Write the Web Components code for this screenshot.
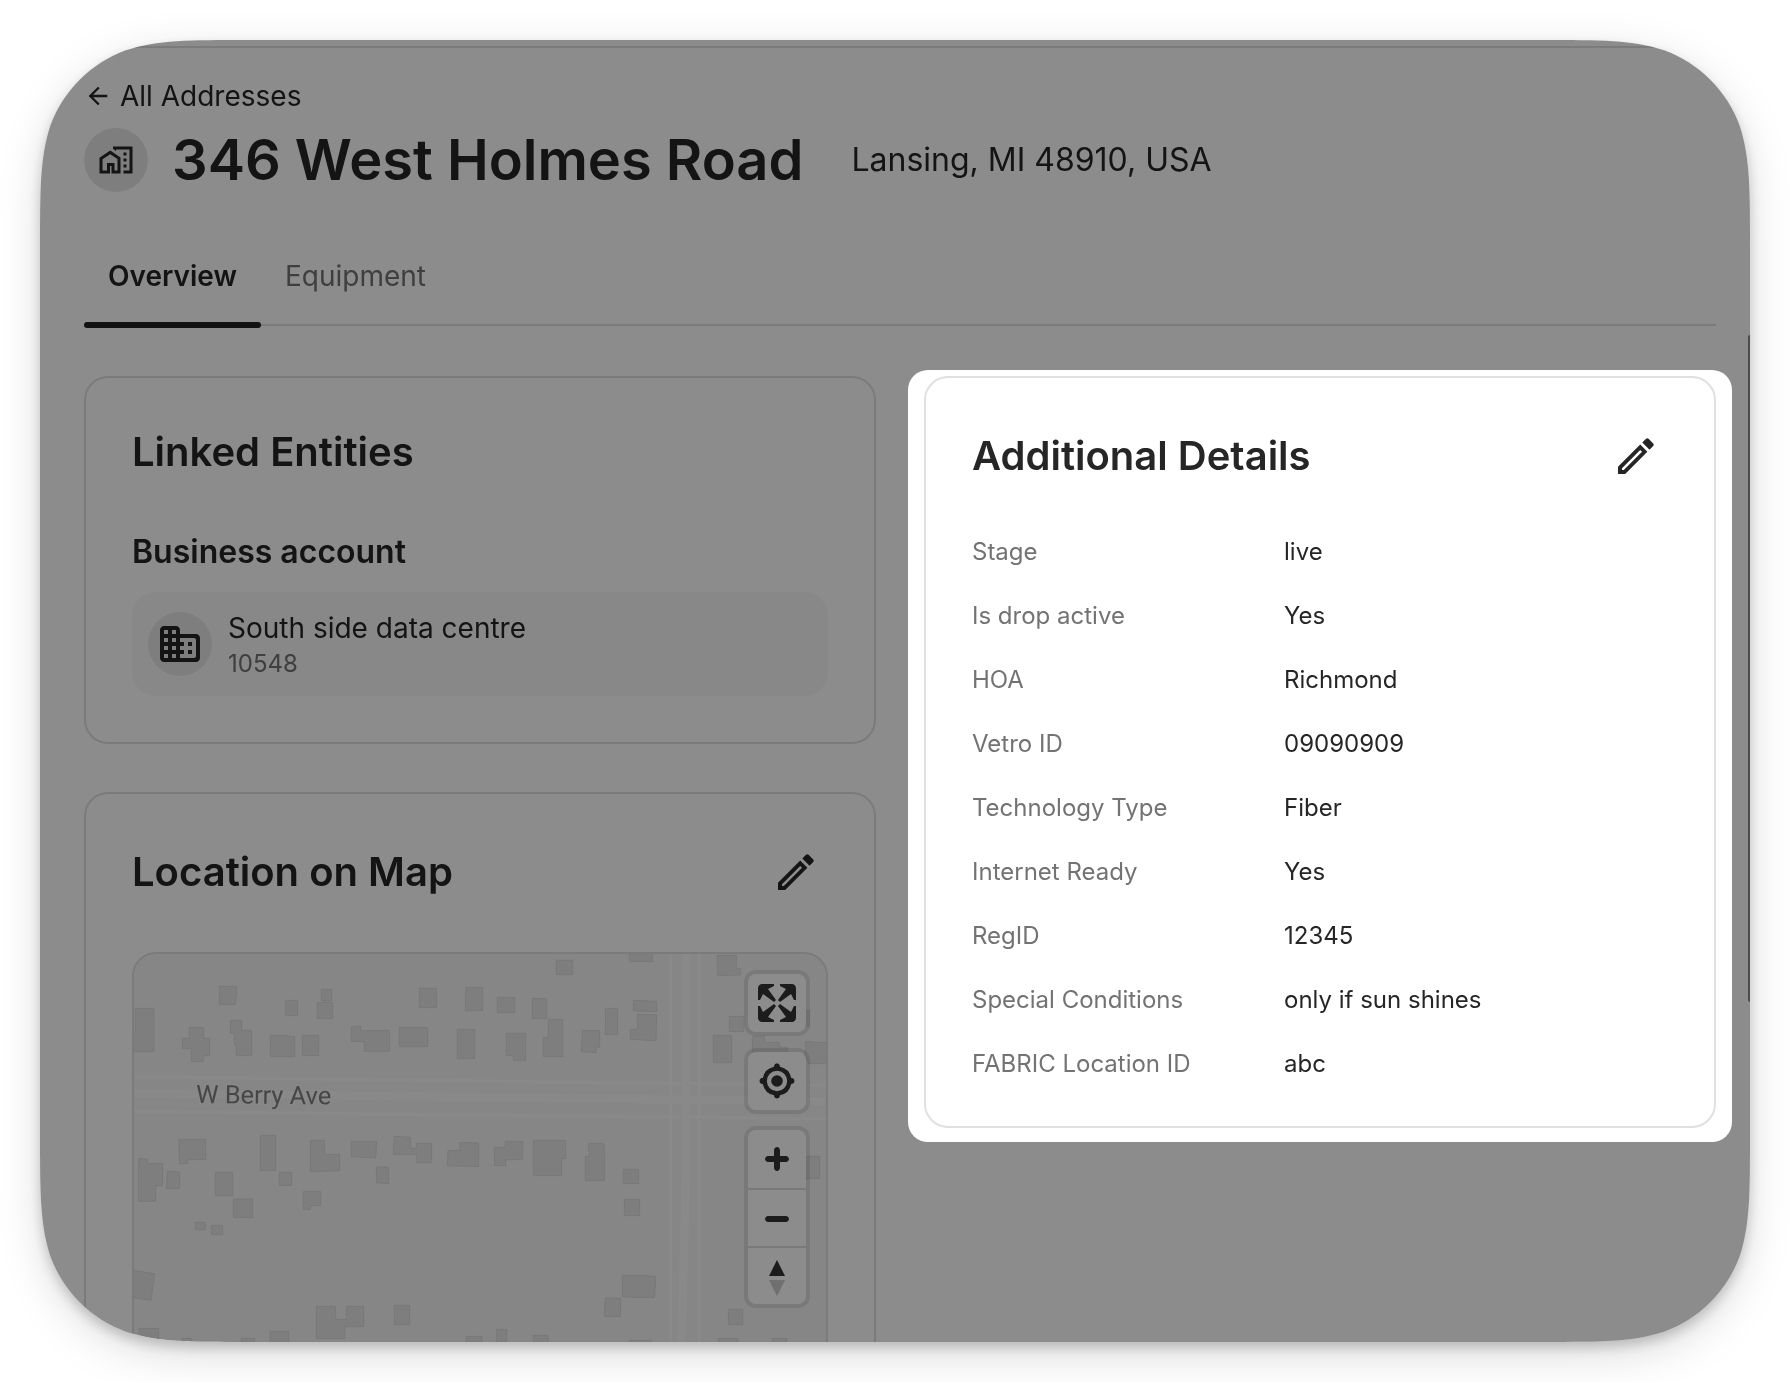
<!DOCTYPE html>
<html lang="en">
<head>
<meta charset="utf-8">
<title>346 West Holmes Road</title>
<style>
  body {
    margin: 0;
    padding: 40px;
    height: 100vh;
    box-sizing: border-box;
    overflow: hidden;
    background: #fff;
    color: #262626;
    font-family: Inter, "Liberation Sans", sans-serif;
    --muted: #737373;
    --line: #e0e0e0;
    --soft: #f8f8f8;
    --chip: #e6e6e6;
    --scrim: rgba(0, 0, 0, 0.45);
  }
</style>
</head>
<body>

<app-window>
  <page-header city="Lansing, MI 48910, USA">
    <span slot="back">All Addresses</span>
    346 West Holmes Road
  </page-header>

  <tab-bar tabs="Overview,Equipment"></tab-bar>

  <card-columns>
    <info-card heading="Linked Entities">
      <entity-group label="Business account">
        <entity-item code="10548">South side data centre</entity-item>
      </entity-group>
    </info-card>
    <info-card heading="Location on Map" editable>
      <street-map></street-map>
    </info-card>

    <spot-light slot="side">
      <info-card heading="Additional Details" editable class="details">
        <detail-list></detail-list>
      </info-card>
    </spot-light>
  </card-columns>
</app-window>

<script>
// ---------------------------------------------------------------------------
// Helpers
// ---------------------------------------------------------------------------

const ICONS = {
  back: ["0 0 24 24", `<path d="M20 11H7.83l5.59-5.59L12 4l-8 8 8 8 1.41-1.41L7.83 13H20v-2z"/>`],
  homeWork: ["0 0 24 24", `<path d="M17 15h2v2h-2zM17 11h2v2h-2zM17 7h2v2h-2z"/><path d="M10 3v1.51l2 1.43V5h9v14h-4v2h6V3z"/><path d="M8.17 5.7L15 10.25V21H9v-5H8v5H1V10.48L8.17 5.7zM3 11.5V19h3v-5h5v5h2v-7.6L8.17 8.1z"/>`],
  business: ["0 0 24 24", `<path d="M12 7V5c0-1.1-.9-2-2-2H4c-1.1 0-2 .9-2 2v14c0 1.1.9 2 2 2h16c1.1 0 2-.9 2-2V9c0-1.1-.9-2-2-2h-8zM6 19H4v-2h2v2zm0-4H4v-2h2v2zm0-4H4V9h2v2zm0-4H4V5h2v2zm4 12H8v-2h2v2zm0-4H8v-2h2v2zm0-4H8V9h2v2zm0-4H8V5h2v2zm9 12h-7v-2h2v-2h-2v-2h2v-2h-2V9h7c.55 0 1 .45 1 1v8c0 .55-.45 1-1 1zm-1-8h-2v2h2v-2zm0 4h-2v2h2v-2z"/>`],
  pencil: ["0 0 48 48", `<path fill-rule="evenodd" d="M6 42V34.8L28.2 12.6 35.4 19.8 13.2 42zM10 38h1.8L30 19.8 28.2 18 10 36.2z"/><path d="M30.3 10.5L34 6.8q1.3-1.3 2.6 0L41.2 11.4q1.3 1.3 0 2.6L37.5 17.7z"/>`],
  fullscreen: ["0 0 29 29", `<path d="M24 16v5.5c0 1.75-.75 2.5-2.5 2.5H16v-1l3-1.5-4-5.5 1-1 5.5 4 1.5-3h1zM6 16l1.5 3 5.5-4 1 1-4 5.5 3 1.5v1H7.5C5.75 24 5 23.25 5 21.5V16h1zm7-11v1l-3 1.5 4 5.5-1 1-5.5-4L6 13H5V7.5C5 5.75 5.75 5 7.5 5H13zm11 2.5c0-1.75-.75-2.5-2.5-2.5H16v1l3 1.5-4 5.5 1 1 5.5-4 1.5 3h1V7.5z"/>`],
  locate: ["0 0 20 20", `<path d="M10 4C9 4 9 5 9 5v.1A5 5 0 0 0 5.1 9H5s-1 0-1 1 1 1 1 1h.1A5 5 0 0 0 9 14.9v.1s0 1 1 1 1-1 1-1v-.1a5 5 0 0 0 3.9-3.9h.1s1 0 1-1-1-1-1-1h-.1A5 5 0 0 0 11 5.1V5s0-1-1-1zm0 2.5a3.5 3.5 0 1 1 0 7 3.5 3.5 0 1 1 0-7z"/><circle cx="10" cy="10" r="2"/>`],
  zoomIn: ["0 0 29 29", `<path d="M14.5 8.5c-.75 0-1.5.75-1.5 1.5v3h-3c-.75 0-1.5.75-1.5 1.5S9.25 16 10 16h3v3c0 .75.75 1.5 1.5 1.5S16 19.75 16 19v-3h3c.75 0 1.5-.75 1.5-1.5S19.75 13 19 13h-3v-3c0-.75-.75-1.5-1.5-1.5z"/>`],
  zoomOut: ["0 0 29 29", `<path d="M10 13c-.75 0-1.5.75-1.5 1.5S9.25 16 10 16h9c.75 0 1.5-.75 1.5-1.5S19.75 13 19 13h-9z"/>`],
  compass: ["0 0 29 29", `<path d="M10.5 14l4-8 4 8z"/><path fill="#ccc" d="M10.5 16l4 8 4-8z"/>`],
};

/** Inline SVG for one of the named icons, drawn at the given pixel size. */
function icon(name, size) {
  const [viewBox, body] = ICONS[name];
  return `<svg viewBox="${viewBox}" width="${size}" height="${size}" fill="currentColor" aria-hidden="true">${body}</svg>`;
}

/** Base class: builds an open shadow root from styles() and html(). */
class UiElement extends HTMLElement {
  connectedCallback() {
    if (this.shadowRoot) return;
    this.attachShadow({ mode: "open" }).innerHTML = `
      <style>
        :host { display: block; }
        *, ::before, ::after { box-sizing: border-box; }
        h1, h2, h3, p, dl, dd { margin: 0; }
        button { font: inherit; color: inherit; border: 0; padding: 0; background: none; cursor: pointer; }
        svg { display: block; flex: none; }
        ${this.styles()}
      </style>
      ${this.html()}`;
    this.ready?.();
  }
}

/** Rounded rectangle outline with smoothed (continuous) corners. */
function smoothRect(w, h, r) {
  const steps = [
    [0, 1.5287], [0, 1.0885], [0, 0.8684], [0.0749, 0.6315],
    [0.1691, 0.3728], [0.3728, 0.1691], [0.6315, 0.0749],
    [0.8684, 0], [1.0885, 0], [1.5287, 0],
  ].map(([x, y]) => [x * r, y * r]);
  const corner = (pts, fx, fy) => {
    const p = pts.map(([x, y]) => `${fx(x).toFixed(2)} ${fy(y).toFixed(2)}`);
    return `L${p[0]}C${p.slice(1, 4)}C${p.slice(4, 7)}C${p.slice(7, 10)}`;
  };
  const back = [...steps].reverse();
  const near = (v) => v;
  const right = (v) => w - v;
  const bottom = (v) => h - v;
  const d =
    corner(steps, near, near) +
    corner(back, right, near) +
    corner(steps, right, bottom) +
    corner(back, near, bottom);
  return "M" + d.slice(1) + "Z";
}

// ---------------------------------------------------------------------------
// Window and layout
// ---------------------------------------------------------------------------

class AppWindow extends UiElement {
  styles() {
    return `
      :host {
        height: 100%;
        filter: drop-shadow(0 6px 6px rgba(0, 0, 0, 0.18)) drop-shadow(0 12px 20px rgba(0, 0, 0, 0.14));
      }
      .frame {
        position: relative;
        height: 100%;
        overflow: hidden;
        background: #fff;
      }
      .topbar { height: 8px; border-bottom: 2px solid var(--line); }
      .content { padding: 28px 34px 0 44px; }
      .thumb {
        position: absolute;
        top: 295px;
        right: 0;
        bottom: 340px;
        width: 2px;
        border-radius: 2px 0 0 2px;
        background: #8a8a8a;
      }
    `;
  }

  html() {
    return `
      <div class="frame">
        <div class="topbar"></div>
        <main class="content"><slot></slot></main>
        <div class="thumb"></div>
      </div>`;
  }

  ready() {
    const frame = this.shadowRoot.querySelector(".frame");
    const clip = () => {
      frame.style.clipPath = `path("${smoothRect(frame.clientWidth, frame.clientHeight, 136)}")`;
    };
    clip();
    new ResizeObserver(clip).observe(frame);
  }
}

class CardColumns extends UiElement {
  styles() {
    return `
      :host {
        display: grid;
        grid-template-columns: 1fr 1fr;
        gap: 48px;
        align-items: start;
      }
      .main { display: grid; gap: 48px; }
    `;
  }

  html() {
    return `<div class="main"><slot></slot></div><slot name="side"></slot>`;
  }
}

/** Highlights its content and dims everything around it. */
class SpotLight extends UiElement {
  styles() {
    return `
      :host {
        position: relative;
        z-index: 2;
        margin: -6px -16px -14px;
        padding: 6px 16px 14px;
        border-radius: 20px;
        background: #fff;
        box-shadow: 0 0 0 2000px var(--scrim);
      }
    `;
  }

  html() {
    return `<slot></slot>`;
  }
}

// ---------------------------------------------------------------------------
// Header and tabs
// ---------------------------------------------------------------------------

class PageHeader extends UiElement {
  styles() {
    return `
      a {
        display: inline-flex;
        align-items: center;
        gap: 8px;
        color: inherit;
        text-decoration: none;
        font-size: 28px;
        line-height: 40px;
        vertical-align: top;
      }
      .title {
        display: flex;
        align-items: center;
        gap: 24px;
        margin: 12px 0 36px;
      }
      .badge {
        display: grid;
        place-items: center;
        width: 64px;
        height: 64px;
        border-radius: 50%;
        background: var(--chip);
      }
      h1 { font-size: 56px; line-height: 64px; font-weight: 600; }
      p { font-size: 32px; line-height: 40px; margin-left: 24px; }
    `;
  }

  html() {
    return `
      <a href="#addresses">${icon("back", 28)}<slot name="back"></slot></a>
      <div class="title">
        <span class="badge">${icon("homeWork", 36)}</span>
        <h1><slot></slot></h1>
        <p>${this.getAttribute("city")}</p>
      </div>`;
  }
}

class TabBar extends UiElement {
  styles() {
    return `
      nav {
        display: flex;
        height: 98px;
        border-bottom: 2px solid var(--line);
        margin-bottom: 50px;
      }
      button {
        position: relative;
        padding: 0 24px;
        color: var(--muted);
        font-size: 28px;
        line-height: 40px;
      }
      button[aria-current] { color: inherit; font-weight: 600; }
      button[aria-current]::after {
        content: "";
        position: absolute;
        inset: auto 0 -4px;
        height: 6px;
        border-radius: 3px;
        background: #212121;
      }
    `;
  }

  html() {
    const tabs = this.getAttribute("tabs").split(",");
    return `<nav>${tabs
      .map((tab, i) => `<button type="button"${i === 0 ? ' aria-current="page"' : ""}>${tab}</button>`)
      .join("")}</nav>`;
  }

  ready() {
    const buttons = this.shadowRoot.querySelectorAll("button");
    for (const button of buttons) {
      button.addEventListener("click", () => {
        buttons.forEach((b) => b.removeAttribute("aria-current"));
        button.setAttribute("aria-current", "page");
      });
    }
  }
}

// ---------------------------------------------------------------------------
// Cards
// ---------------------------------------------------------------------------

class InfoCard extends UiElement {
  styles() {
    return `
      :host {
        box-sizing: border-box;
        border: 2px solid var(--line);
        border-radius: 24px;
        padding: 46px;
      }
      header {
        display: flex;
        align-items: center;
        justify-content: space-between;
        margin-bottom: 48px;
      }
      :host(.details) header { margin-bottom: 32px; }
      h2 { font-size: 40px; line-height: 56px; font-weight: 600; }
      button { display: grid; place-items: center; width: 64px; height: 64px; }
    `;
  }

  html() {
    const heading = this.getAttribute("heading");
    const edit = this.hasAttribute("editable")
      ? `<button type="button" aria-label="Edit ${heading}">${icon("pencil", 48)}</button>`
      : "";
    return `<header><h2>${heading}</h2>${edit}</header><slot></slot>`;
  }
}

class EntityGroup extends UiElement {
  styles() {
    return `h3 { font-size: 32px; line-height: 48px; font-weight: 600; margin-bottom: 16px; }`;
  }

  html() {
    return `<h3>${this.getAttribute("label")}</h3><slot></slot>`;
  }
}

class EntityItem extends UiElement {
  styles() {
    return `
      :host {
        display: flex;
        align-items: center;
        gap: 16px;
        padding: 16px;
        border-radius: 24px;
        background: var(--soft);
      }
      .badge {
        display: grid;
        place-items: center;
        width: 64px;
        height: 64px;
        border-radius: 50%;
        background: var(--chip);
      }
      .name { font-size: 28px; line-height: 40px; }
      .code { font-size: 24px; line-height: 32px; color: var(--muted); }
    `;
  }

  html() {
    return `
      <span class="badge">${icon("business", 48)}</span>
      <div>
        <p class="name"><slot></slot></p>
        <p class="code">${this.getAttribute("code")}</p>
      </div>`;
  }
}

const DETAILS = [
  ["Stage", "live"],
  ["Is drop active", "Yes"],
  ["HOA", "Richmond"],
  ["Vetro ID", "09090909"],
  ["Technology Type", "Fiber"],
  ["Internet Ready", "Yes"],
  ["RegID", "12345"],
  ["Special Conditions", "only if sun shines"],
  ["FABRIC Location ID", "abc"],
];

class DetailList extends UiElement {
  styles() {
    return `
      :host { margin-bottom: -16px; }
      dl {
        display: grid;
        grid-template-columns: 312px 1fr;
        font-size: 24px;
        line-height: 64px;
      }
      dt { color: var(--muted); }
    `;
  }

  html() {
    return `<dl>${DETAILS.map(([k, v]) => `<dt>${k}</dt><dd>${v}</dd>`).join("")}</dl>`;
  }
}

// ---------------------------------------------------------------------------
// Map
// ---------------------------------------------------------------------------

// Building footprints, in map units (3 units = 1 px), grouped by map tile.
const TILES = [
  {
    x: -42, y: -42,
    shapes: [
      "46,205 102,205 102,335 40,335 40,273 46,273",
      "298,139 350,139 350,172 347,172 347,194 298,194",
      "496,181 533,181 533,227 496,227",
      "604,148 635,148 635,182 604,182",
      "592,187 638,187 638,236 592,236",
      "208,262 251,262 251,295 269,295 269,347 251,347 251,365 214,365 214,326 187,326 187,295 208,295",
      "331,241 365,241 365,271 395,271 395,347 349,347 349,314 343,314 343,280 331,280",
      "451,286 500,286 500,289 524,289 524,350 454,350 451,347",
      "547,286 596,286 596,347 547,347",
      "694,261 722,258 722,271 809,271 809,334 733,334 733,305 694,305",
      "838,262 923,262 923,320 838,320",
      "898,145 950,145 950,203 898,203",
      "177,598 257,598 257,659 203,659 203,671 178,671",
      "57,655 82,657 82,670 128,670 128,737 107,737 107,784 55,784 55,700",
      "142,694 179,696 179,746 139,746",
      "286,697 338,697 338,767 286,767",
      "421,586 467,586 467,692 421,692",
      "478,697 515,697 515,737 478,737",
      "571,601 614,601 614,643 659,643 659,692 571,695",
      "694,604 770,604 767,654 694,650",
      "823,589 872,592 872,625 889,625 889,610 935,610 935,668 889,668 889,643 820,643",
      "769,680 806,682 806,731 769,728",
    ],
  },
  {
    x: 978, y: -42,
    shapes: [
      "289,61 338,61 338,104 289,104",
      "508,38 578,38 578,65 508,65",
      "772,46 829,46 829,85 842,85 842,105 772,107",
      "18,142 68,142 68,212 16,212",
      "112,172 164,172 164,218 112,218",
      "217,175 260,175 260,236 217,236",
      "265,238 308,238 308,350 250,350 250,292 265,292",
      "-8,268 44,268 44,356 -8,356",
      "139,280 197,280 197,361 160,361 160,347 139,347",
      "367,271 419,272 419,322 408,322 408,338 364,335",
      "437,205 473,205 473,284 436,284",
      "520,181 590,184 590,215 520,212",
      "532,223 590,225 588,302 511,298 511,268 532,268",
      "808,229 851,229 851,275 808,275",
      "760,286 815,286 815,368 760,368",
      "1039,211 1049,211 1049,260 1039,260",
      "877,289 914,289 914,307 959,307 959,322 983,322 983,340 877,340",
      "1036,304 1068,307 1110,307 1110,371 1046,371 1036,345",
      "0,607 30,607 56,610 56,680 -38,677 -36,631 0,631",
      "136,604 188,604 188,659 137,659 137,677 103,677 103,622 136,622",
      "220,601 317,601 317,656 305,656 305,707 220,707",
      "386,610 431,610 434,650 434,722 376,722 376,649 388,649",
      "490,688 536,688 536,731 490,731",
      "1034,649 1079,649 1079,716 1034,716",
    ],
  },
  {
    x: -42, y: 678,
    shapes: [
      "340,57 398,57 398,113 340,113",
      "550,34 602,34 602,77 572,77 572,89 550,89",
      "226,127 257,127 257,149 226,149",
      "274,136 308,136 308,164 274,164",
      "38,271 104,281 93,361 38,353",
      "58,445 116,445 116,520 58,520",
      "187,475 215,475 215,520 187,520",
      "364,475 404,475 404,520 364,520",
      "450,454 506,454 506,520 450,520",
      "589,379 647,379 647,418 679,418 679,379 731,379 731,440 674,440 674,476 589,476",
      "823,376 869,376 869,434 823,434",
      "1039,469 1086,469 1086,520 1039,520",
    ],
  },
  {
    x: 978, y: 498,
    shapes: [
      "493,238 539,238 539,287 493,287",
      "487,466 536,466 587,469 584,533 524,533 487,530",
      "436,534 482,535 481,590 433,589",
      "109,628 140,628 140,700 109,700",
      "220,646 264,646 266,700 220,700",
      "508,661 575,661 575,700 508,700",
      "805,568 848,568 848,614 805,614",
      "775,655 833,655 833,700 775,700",
      "937,655 980,655 980,700 937,700",
    ],
  },
];

class StreetMap extends UiElement {
  styles() {
    return `
      :host {
        position: relative;
        border: 2px solid var(--line);
        border-radius: 24px;
        overflow: hidden;
        background: #f5f5f5;
      }
      .canvas { width: 100%; }
      .controls {
        position: absolute;
        top: 16px;
        right: 16px;
        display: grid;
        gap: 12px;
        color: #333;
      }
      .group {
        border: 4px solid rgba(0, 0, 0, 0.1);
        border-radius: 12px;
        background: #fff padding-box;
      }
      button { display: grid; place-items: center; width: 58px; height: 58px; }
      button + button { border-top: 2px solid #ddd; }
    `;
  }

  html() {
    const tiles = TILES.map(
      ({ x, y, shapes }) =>
        `<g transform="translate(${x} ${y})">${shapes.map((s) => `<polygon points="${s}"/>`).join("")}</g>`,
    ).join("");
    return `
      <svg class="canvas" viewBox="0 0 2076 1560" role="img" aria-label="Map of W Berry Ave">
        <g stroke="#fafafa" fill="none">
          <path stroke-width="9" d="M0 369L2076 393M0 472L2076 494M1609 0V1560M1696 0V1560"/>
          <path stroke-width="24" d="M0 418L2076 442M1656 0V660L1642 1180V1560"/>
        </g>
        <g fill="#e6e6e6" stroke="#dadada" stroke-width="3">${tiles}</g>
        <text x="186" y="447" transform="rotate(0.6 186 447)" font-family="Roboto, sans-serif" font-size="76"
          fill="#808080" stroke="#f8f8f8" stroke-width="6" paint-order="stroke">W Berry Ave</text>
      </svg>
      <div class="controls">
        <div class="group"><button type="button" aria-label="Full screen">${icon("fullscreen", 58)}</button></div>
        <div class="group"><button type="button" aria-label="Find my location">${icon("locate", 58)}</button></div>
        <div class="group">
          <button type="button" aria-label="Zoom in">${icon("zoomIn", 58)}</button>
          <button type="button" aria-label="Zoom out">${icon("zoomOut", 58)}</button>
          <button type="button" aria-label="Reset bearing to north">${icon("compass", 58)}</button>
        </div>
      </div>`;
  }
}

customElements.define("app-window", AppWindow);
customElements.define("page-header", PageHeader);
customElements.define("tab-bar", TabBar);
customElements.define("card-columns", CardColumns);
customElements.define("spot-light", SpotLight);
customElements.define("info-card", InfoCard);
customElements.define("entity-group", EntityGroup);
customElements.define("entity-item", EntityItem);
customElements.define("detail-list", DetailList);
customElements.define("street-map", StreetMap);
</script>
</body>
</html>
